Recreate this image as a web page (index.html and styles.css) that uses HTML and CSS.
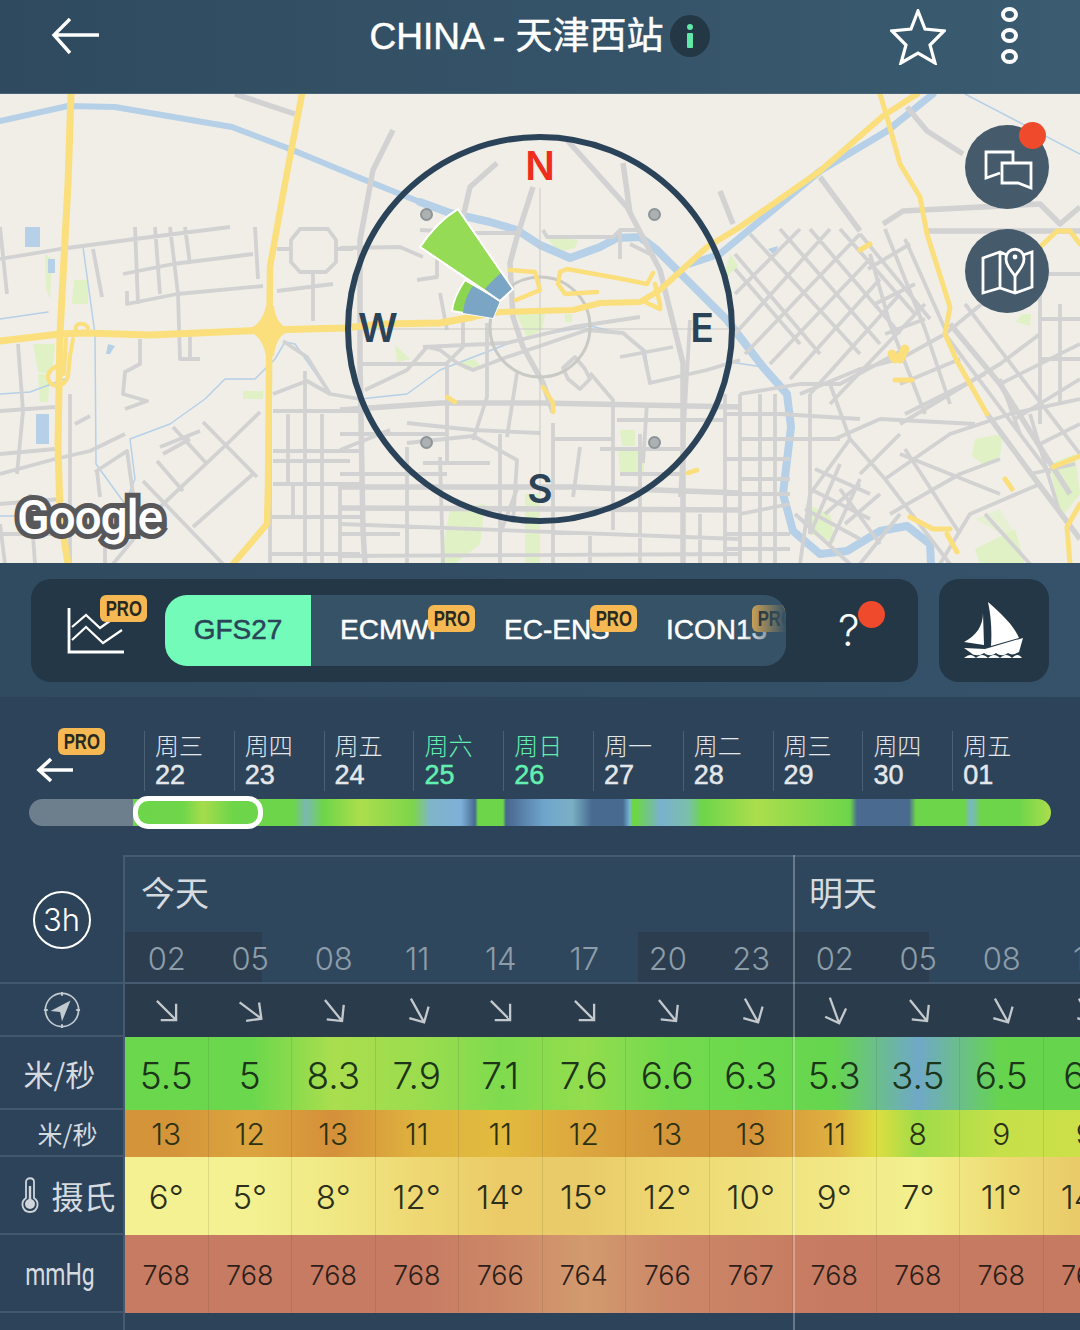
FILE: index.html
```html
<!DOCTYPE html>
<html lang="en">
<head>
    <meta charset="UTF-8">
    <meta name="viewport" content="width=device-width, initial-scale=1.0">
    <title>CHINA - 天津西站</title>
    <link rel="stylesheet" href="styles.css">
</head>
<body>
    <svg class="defs" width="0" height="0">
        <symbol id="arrow" viewBox="0 0 26 26">
            <path d="M3 3L23 23M7 23H23V6" fill="none" stroke="currentColor" stroke-width="2.4"/>
        </symbol>
    </svg>

    <header class="topbar">
        <div class="topbar-left">
            <svg class="back-icon" viewBox="0 0 50 38"><path d="M48 18H3M19 2L3 18L19 36" fill="none" stroke="#fff" stroke-width="3.4"/></svg>
        </div>
        <div class="title-group">
            <span class="title">CHINA - 天津西站</span>
            <span class="info-pill"><i class="info-dot"></i><i class="info-stem"></i></span>
        </div>
        <div class="topbar-right">
            <svg class="star-icon" viewBox="0 0 56 56"><path d="M28 2L35 20L54 22L40 36L45 54L28 44L11 54L16 36L2 22L21 20Z" fill="none" stroke="#fff" stroke-width="3.2"/></svg>
            <div class="kebab"><i></i><i></i><i></i></div>
        </div>
    </header>

    <section class="map">
        <svg class="map-art" viewBox="0 0 1080 470" width="1080" height="470">
            <rect width="1080" height="470" fill="#f0eee7"/>
            <!-- parks -->
            <g fill="#dff1c5">
                <path d="M547 143L578 146L575 154L558 158Z"/>
                <path d="M515 218L545 220L542 236L527 243Z"/>
                <path d="M565 220H572V228H565Z"/>
                <path d="M395 251L410 265L397 268Z"/>
                <path d="M460 268L475 265L480 272L465 276Z"/>
                <path d="M620 336H635V352H622Z"/>
                <path d="M618 355H644V378H620Z"/>
                <path d="M450 415L485 410L480 450L455 470H440Z"/>
                <path d="M525 400H540V470H525Z"/>
                <path d="M45 160L52 165L50 205L46 195Z"/>
                <path d="M74 186H88V210H72Z"/>
                <path d="M33 250H55L52 280L38 278Z"/>
                <path d="M38 280H50L48 308H40Z"/>
                <path d="M243 297H263V305H243Z"/>
                <path d="M730 160L738 172L722 188Z"/>
                <path d="M1022 220H1031L1030 232L1016 228Z"/>
                <path d="M975 345L1003 340L1000 362L985 372L972 362Z"/>
                <path d="M1050 370L1075 360L1080 400L1060 425Z"/>
                <path d="M975 455L1015 435L1025 470H980Z"/>
                <path d="M975 425L1000 415L1020 450Z" opacity=".6"/>
                <path d="M805 410L830 420L835 448L810 440Z"/>
            </g>
            <!-- water -->
            <g fill="none" stroke="#b6d0e8" stroke-linejoin="round" stroke-linecap="round">
                <path stroke-width="6" d="M0 27L68 12L115 13L232 33L290 55L360 84L420 108"/>
                <path stroke-width="8" d="M420 108L450 119L490 128L517 136L540 151L570 164L600 153L617 144L640 143L657 156L687 186L727 226L763 273L787 300L791 333L783 400L793 437L820 460L847 457L880 437L907 432L930 450L931 470"/>
                <path stroke-width="7" d="M690 170L720 160L820 77L887 37L933 0"/>
                <path stroke-width="1.5" d="M83 153L95 240L96 370L125 410M0 225L48 218M0 422L45 422M125 410L135 385L130 345L170 330L205 305L225 285L255 285L275 265L285 248L295 250L330 300L360 305L407 300L440 276L520 245L590 232L625 240L645 256L650 288L700 278L730 268L763 273M965 0L1080 60"/>
                <path stroke-width="1.5" d="M0 300L30 298L65 285"/>
            </g>
            <g fill="#b6d0e8">
                <rect x="25" y="133" width="15" height="20"/>
                <rect x="36" y="320" width="13" height="30"/>
                <rect x="48" y="165" width="7" height="14"/>
                <path d="M108 250L115 252L110 260H106Z"/>
                <path d="M768 155L778 152L775 162Z"/>
            </g>
            <!-- streets, wide -->
            <g fill="none" stroke="#d2d2d2" stroke-width="5.5" stroke-linejoin="round">
                <path d="M235 0L295 20M907 13L927 37L963 60M927 137H1080M883 130L903 117L1040 110L1060 130L1080 113M820 83L860 137M720 97L733 130"/>
                <path d="M533 93L517 143L510 169L513 223L523 253L543 289L553 318M393 36L373 76L360 146L360 269L363 436L365 470"/>
                <path d="M497 69L470 93L463 123M567 46L627 113L660 176L683 269L683 470M623 69L630 119"/>
                <path d="M987 320L1035 385L1080 445M950 230L1000 290L1070 400"/>
                <path d="M340 316L440 309L540 309L740 313M340 414L740 416M340 393L573 393L740 399"/>
            </g>
            <!-- streets -->
            <g fill="none" stroke="#d2d2d2" stroke-width="3.8" stroke-linejoin="round">
                <path d="M0 165L60 155L135 145L230 133M135 133L138 210M123 180L173 170L253 160M127 197V210L177 200L263 192M155 133L160 200M170 133L178 200L180 265H200M185 133L190 170M255 133L258 185M93 155L102 203M0 133L7 200"/>
                <path d="M190 240V265M140 245V270L125 278L123 300L147 307L125 315M18 250L23 317L17 380M0 317L55 313M0 360L55 355M0 380L55 365L90 357L125 340M70 300V470M75 330L90 322M95 378L127 357L133 400"/>
                <path d="M143 387L223 470M203 328L257 383M173 333L207 370M160 353L200 337M163 360L190 345M260 318L227 350L160 413L113 470M253 380L193 433M157 367L183 397M97 377L100 403M60 405L0 410M60 440L0 440M5 470L0 430M30 400L35 470M105 470L105 440"/>
                <path d="M273 317H360M273 357H360M273 367H350M273 390H360M270 423H360M270 460H360M305 277V470M322 320V470M288 320V390M340 390V470M293 390V423M270 300V470"/>
                <path d="M273 300L307 287L330 300M283 247L307 263L330 300L360 305"/>
                <path d="M300 135L328 135L336 146L336 168L326 178L300 178L291 168L291 146ZM313 180V227M277 197L333 190M277 155H291M337 155H353"/>
                <path d="M420 136L473 139L517 139M340 154L400 153L423 163M437 163V183L417 186M440 199L447 236M463 226V253L447 269L447 369M543 136L547 143H613L620 136H640M620 136V165M630 150L650 160"/>
                <path d="M365 296L407 276L427 253L440 256L457 269L473 276L507 263L587 236L623 239L643 256L650 289L707 276L740 266M423 253L507 249L573 233L640 223M487 229V303L473 346M517 279L507 343"/>
                <path d="M590 279L613 306V436M647 309L643 369M690 226L680 403M620 263L673 253M407 329L473 336L540 339M340 356L390 336M407 349L473 342L517 366L513 429M407 353V470M423 369H490M553 329V470M617 326H727M580 353L573 403M440 363L443 470M340 430L740 445M340 462L740 460M500 440V470M590 440V470M640 420V470M700 420V470M340 440H400"/>
                <path d="M360 270H447M340 340H447M500 340V470M340 380H447M600 355H680M620 380H680M640 340V420M553 345H613M517 395L500 440"/>
                <path d="M563 274L575 263L585 275L590 285L580 295L568 285Z"/>
                <path d="M750 140L860 260M780 135L880 250M810 135L900 240M840 135L915 220M735 160L820 260M735 175L800 250M860 140L930 225M735 200L800 135M735 240L830 135M745 260L860 140M770 270L870 165M790 285L880 185M810 300L900 200M830 310L925 210"/>
                <path d="M870 160L890 230L925 320M885 135L925 235L950 310M905 145L945 235M868 175L910 150M875 210L915 190M885 240L925 225"/>
                <path d="M800 300L860 275L900 265L945 240L1000 195M740 300L800 290L840 290L905 255M830 290L850 345L885 385L950 470M780 320L860 325M740 345L840 345M740 385L790 385M740 420L790 410M760 300V470M725 300V470M810 300V440"/>
                <path d="M725 320H790M725 365H790M725 400H790M725 440H790M725 455H790M740 300V470M775 300V470"/>
                <path d="M850 345L810 400L800 470M815 375L870 400M810 395L870 425M805 415L860 445M840 370L810 440M860 385L830 450"/>
                <path d="M900 330L950 300L1000 270L1040 240M885 385L950 340L1010 320L1080 305M945 240L1050 380M965 210L1080 360M1040 180V330M1060 210V310M1040 180H1080M1040 225H1080M1040 265H1080M990 210L1030 165M1030 320L1060 420M1000 285L1020 340"/>
                <path d="M1000 290L1080 250M1015 325L1080 285M1040 350L1080 330M900 290L960 265M905 320L985 280"/>
                <path d="M860 380L900 340M900 360L1000 400M835 345L880 325L975 330M890 420L960 380L1000 365M940 470L970 420L1040 390M860 470L900 420M825 420L860 390M845 430L880 400M985 420L1030 470M1030 380L1075 370M905 355L960 440M840 395L880 450M795 420L850 470"/>
            </g>
            <!-- faint ring and cross hair -->
            <g fill="none" stroke="#c9c9c5">
                <circle cx="540" cy="233" r="50" stroke-width="3"/>
                <path d="M540 94V400M340 235H740" stroke-width="1"/>
            </g>
            <!-- highways -->
            <g fill="none" stroke="#fadf7c" stroke-linejoin="round" stroke-linecap="round">
                <path stroke-width="7" d="M71 0L68 90L60 240L58 350L60 420L68 470"/>
                <path stroke-width="7" d="M0 247L60 240L85 239L150 241L270 236L345 234L380 230L440 229L473 223"/>
                <path stroke-width="6" d="M473 223L500 218L573 216L600 209L640 208L660 196L707 153L740 133L820 77L883 22L917 0"/>
                <path stroke-width="6.5" d="M302 0L283 100L270 173L268 393L267 430L233 470"/>
                <path stroke-width="5" d="M880 0L887 23L900 70L920 103L927 140L950 213L945 240L957 267L987 320"/>
                <path stroke-width="4" d="M78 240C70 230 84 226 88 234M73 245L70 262L68 283C62 297 48 292 48 283C48 276 56 272 62 270M66 245L64 280"/>
                <path stroke-width="4.5" d="M510 176L535 178L540 196L516 206M597 198L565 200L558 190L560 178L567 175L617 184L647 190L653 179M543 293L553 309V318M447 303L455 308M688 379L697 376M645 208L660 215V210L655 190"/>
                <path stroke-width="5" d="M1040 153L1057 137H1070L1080 150M1053 373L1080 362M1080 410L1067 433L1070 470M910 423L933 435H950M947 440L957 458M860 156L870 150M1005 385L1012 395M895 286H912"/>
                <path stroke-width="9" d="M900 265L905 255M895 265L892 260"/>
            </g>
            <path fill="#fadf7c" d="M245 236Q262 232 266 212H274Q276 232 292 236Q276 240 274 262H266Q262 240 245 236Z"/>
        </svg>

        <div class="compass">
            <i class="compass-dot dot-nw"></i><i class="compass-dot dot-ne"></i><i class="compass-dot dot-sw"></i><i class="compass-dot dot-se"></i>
            <svg class="sectors" viewBox="0 0 378 378" width="378" height="378">
                <g transform="translate(-351 -46)" stroke="#fff" stroke-width="1.8">
                    <path d="M465 186C457 198 453 207 452 217L493 224L500 207Z" fill="#8cd64f"/>
                    <path d="M473 192C467 200 464 209 463 219L493 224L500 207Z" fill="#7aa5c4" stroke="none"/>
                    <path d="M458 115L513 195L500 207L420 153C430 138 443 124 458 115Z" fill="#96db56"/>
                    <path d="M501 179L513 195L500 207L485 195C490 189 495 184 501 179Z" fill="#7aa5c4" stroke="none"/>
                    <path d="M458 115L513 195L500 207L420 153C430 138 443 124 458 115Z" fill="none"/>
                </g>
            </svg>
            <span class="compass-label north">N</span>
            <span class="compass-label west">W</span>
            <span class="compass-label east">E</span>
            <span class="compass-label south">S</span>
        </div>

        <button class="map-btn chat-btn">
            <svg viewBox="965 125 84 84" width="84" height="84"><path d="M1013 163V152H986V178L1000 173M1002 163H1031V188L1018 183H1002Z" fill="none" stroke="#fff" stroke-width="2.8"/></svg>
            <i class="red-dot"></i>
        </button>
        <button class="map-btn layers-btn">
            <svg viewBox="965 229 84 84" width="84" height="84"><path d="M1007 255L1000 252L983 258V293L1000 288L1015 293L1032 287V252L1023 255M1000 252V288M1015 274V293" fill="none" stroke="#fff" stroke-width="2.8"/><path d="M1015 276C1009 268 1006 264 1006 259C1006 246 1024 246 1024 259C1024 264 1021 268 1015 276Z" fill="none" stroke="#fff" stroke-width="2.8"/><circle cx="1015" cy="257" r="2.4" fill="#fff"/></svg>
        </button>
        <span class="google-mark">Google</span>
    </section>

    <section class="model-bar">
        <div class="model-panel">
            <div class="chart-btn">
                <svg viewBox="0 0 60 50" width="60" height="50"><path d="M2 0V44H57" fill="none" stroke="#fff" stroke-width="2.8"/><path d="M5 19L19 7L33 20L47 10M5 32L19 19L36 35L55 22" fill="none" stroke="#fff" stroke-width="2.2"/></svg>
                <span class="pro pro-chart"><b>PRO</b></span>
            </div>
            <div class="tabs">
                <div class="tab tab-gfs">GFS27</div>
                <div class="tab tab-ecmwf">ECMWF<span class="pro pro-tab"><b>PRO</b></span></div>
                <div class="tab tab-ens">EC-ENS<span class="pro pro-tab"><b>PRO</b></span></div>
                <div class="tab tab-icon">ICON13<span class="pro pro-tab"><b>PRO</b></span></div>
            </div>
            <div class="help-btn">?<i class="red-dot"></i></div>
        </div>
        <div class="boat-btn">
            <svg viewBox="0 0 60 60" width="60" height="60">
                <path d="M24 2C38 14 50 26 55 38L27 46C28 30 27 16 24 2Z" fill="#fff"/>
                <path d="M19 13C19 26 12 36 0 42L20 45Z" fill="#fff"/>
                <path d="M0 48L21 49L48 41L59 38L55 52C50 55 47 55 44 53C40 56 36 56 32 53C28 56 24 56 20 53C16 56 10 56 7 53Z" fill="#fff"/>
                <path d="M0 58C5 54 8 54 12 58C16 54 20 54 24 58C28 54 32 54 36 58C40 54 44 54 48 58C52 54 55 54 58 58" fill="#fff"/>
            </svg>
        </div>
    </section>

    <section class="days">
        <div class="days-row">
            <div class="days-back">
                <span class="pro pro-days"><b>PRO</b></span>
                <svg class="days-arrow" viewBox="0 0 38 26" width="38" height="26"><path d="M37 13H3M15 2L3 13L15 24" fill="none" stroke="#fff" stroke-width="3.6"/></svg>
            </div>
            <div class="day"><span>周三</span><b>22</b></div>
            <div class="day"><span>周四</span><b>23</b></div>
            <div class="day"><span>周五</span><b>24</b></div>
            <div class="day weekend"><span>周六</span><b>25</b></div>
            <div class="day weekend"><span>周日</span><b>26</b></div>
            <div class="day"><span>周一</span><b>27</b></div>
            <div class="day"><span>周二</span><b>28</b></div>
            <div class="day"><span>周三</span><b>29</b></div>
            <div class="day"><span>周四</span><b>30</b></div>
            <div class="day"><span>周五</span><b>01</b></div>
        </div>
        <div class="timeline">
            <div class="timeline-past"></div>
            <div class="timeline-wind"></div>
            <div class="timeline-pick"></div>
        </div>
    </section>

    <section class="table">
        <div class="table-head">
            <div class="row-label head-label"><span class="step">3h</span></div>
            <div class="head-main">
                <div class="day-titles">
                    <div class="day-title day-today">今天</div>
                    <div class="day-title">明天</div>
                </div>
                <div class="hours">
                    <span>02</span><span>05</span><span>08</span><span>11</span><span>14</span><span>17</span><span>20</span><span>23</span><span>02</span><span>05</span><span>08</span><span>11</span>
                </div>
            </div>
        </div>

        <div class="row row-dir">
            <div class="row-label">
                <svg viewBox="0 0 40 40" width="38" height="38"><circle cx="20" cy="20" r="17.5" fill="none" stroke="#c3cad0" stroke-width="1.8"/><path d="M20 1V5M20 35V39M1 20H5M35 20H39" stroke="#c3cad0" stroke-width="2"/><path d="M29 10L8 21L18 22L20 32Z" fill="#c3cad0"/></svg>
            </div>
            <div class="cells dir-cells">
                <div class="cell"><svg class="arrow"><use href="#arrow"/></svg></div>
                <div class="cell"><svg class="arrow rot-n8"><use href="#arrow"/></svg></div>
                <div class="cell"><svg class="arrow rot-6"><use href="#arrow"/></svg></div>
                <div class="cell"><svg class="arrow rot-16"><use href="#arrow"/></svg></div>
                <div class="cell"><svg class="arrow"><use href="#arrow"/></svg></div>
                <div class="cell"><svg class="arrow"><use href="#arrow"/></svg></div>
                <div class="cell"><svg class="arrow rot-6"><use href="#arrow"/></svg></div>
                <div class="cell"><svg class="arrow rot-16"><use href="#arrow"/></svg></div>
                <div class="cell"><svg class="arrow rot-25"><use href="#arrow"/></svg></div>
                <div class="cell"><svg class="arrow rot-6"><use href="#arrow"/></svg></div>
                <div class="cell"><svg class="arrow rot-16"><use href="#arrow"/></svg></div>
                <div class="cell"><svg class="arrow rot-16"><use href="#arrow"/></svg></div>
            </div>
        </div>

        <div class="row row-wind">
            <div class="row-label">米/秒</div>
            <div class="cells">
                <div class="cell">5.5</div><div class="cell">5</div><div class="cell">8.3</div><div class="cell">7.9</div><div class="cell">7.1</div><div class="cell">7.6</div><div class="cell">6.6</div><div class="cell">6.3</div><div class="cell">5.3</div><div class="cell">3.5</div><div class="cell">6.5</div><div class="cell">6.1</div>
            </div>
        </div>

        <div class="row row-gust">
            <div class="row-label">米/秒</div>
            <div class="cells">
                <div class="cell">13</div><div class="cell">12</div><div class="cell">13</div><div class="cell">11</div><div class="cell">11</div><div class="cell">12</div><div class="cell">13</div><div class="cell">13</div><div class="cell">11</div><div class="cell">8</div><div class="cell">9</div><div class="cell">9</div>
            </div>
        </div>

        <div class="row row-temp">
            <div class="row-label">
                <svg viewBox="0 0 18 36" width="18" height="36"><path d="M5 21V5C5 0 13 0 13 5V21C19 25 17 35 9 35C1 35 -1 25 5 21Z" fill="none" stroke="#cfd5da" stroke-width="1.8"/><circle cx="9" cy="27" r="5" fill="#cfd5da"/><path d="M9 9V27" stroke="#cfd5da" stroke-width="2.4"/></svg>
                <span>摄氏</span>
            </div>
            <div class="cells">
                <div class="cell">6°</div><div class="cell">5°</div><div class="cell">8°</div><div class="cell">12°</div><div class="cell">14°</div><div class="cell">15°</div><div class="cell">12°</div><div class="cell">10°</div><div class="cell">9°</div><div class="cell">7°</div><div class="cell">11°</div><div class="cell">14°</div>
            </div>
        </div>

        <div class="row row-press">
            <div class="row-label"><span class="narrow">mmHg</span></div>
            <div class="cells">
                <div class="cell">768</div><div class="cell">768</div><div class="cell">768</div><div class="cell">768</div><div class="cell">766</div><div class="cell">764</div><div class="cell">766</div><div class="cell">767</div><div class="cell">768</div><div class="cell">768</div><div class="cell">768</div><div class="cell">768</div>
            </div>
        </div>

        <div class="row row-foot">
            <div class="row-label"></div>
        </div>

        <div class="day-line"></div>
    </section>
</body>
</html>
```

FILE: styles.css
```css
* {
    box-sizing: border-box;
}

html, body {
    height: 100%;
}

body {
    margin: 0;
    width: 1080px;
    height: 1330px;
    overflow: hidden;
    background: #2d4359;
    color: #fff;
    font-family: "Inter", "Noto Sans CJK SC", sans-serif;
    display: flex;
    flex-direction: column;
}

i {
    display: block;
}

.defs {
    position: absolute;
}

/* top bar */
.topbar {
    height: 94px;
    flex: none;
    padding-bottom: 22px;
    display: grid;
    grid-template-columns: 1fr auto 1fr;
    align-items: center;
    background: linear-gradient(90deg, #2f4a5f, #3a5b70);
    border-bottom: 1px solid #496577;
}

.topbar-left {
    padding-left: 51px;
}

.back-icon {
    display: block;
    width: 50px;
    height: 38px;
}

.title-group {
    display: flex;
    align-items: center;
    gap: 7px;
}

.title {
    font-family: "Liberation Sans", "Noto Sans CJK SC", sans-serif;
    font-size: 37px;
    line-height: 42px;
    margin-top: 2px;
    color: #fff;
    white-space: nowrap;
    -webkit-text-stroke: .5px #fff;
}

.info-pill {
    width: 40px;
    height: 42px;
    border-radius: 50%;
    background: #243744;
    display: flex;
    flex-direction: column;
    align-items: center;
    justify-content: center;
    gap: 3px;
}

.info-dot {
    width: 6px;
    height: 6px;
    border-radius: 50%;
    background: #5fe8a8;
}

.info-stem {
    width: 6px;
    height: 15px;
    background: #5fe8a8;
    border-radius: 1px;
}

.topbar-right {
    display: flex;
    align-items: center;
    justify-content: flex-end;
    gap: 55px;
    padding-right: 62px;
}

.star-icon {
    width: 56px;
    height: 56px;
    margin-top: 3px;
}

.kebab {
    display: flex;
    flex-direction: column;
    gap: 6px;
}

.kebab i {
    width: 17px;
    height: 15px;
    border: 4px solid #fff;
    border-radius: 50%;
}

/* map */
.map {
    position: relative;
    height: 469px;
    flex: none;
    overflow: hidden;
}

.map-art {
    display: block;
}

.compass {
    position: absolute;
    left: 345px;
    top: 40px;
    width: 390px;
    height: 390px;
    border: 6px solid #2b4358;
    border-radius: 50%;
}

.sectors {
    position: absolute;
    left: 0;
    top: 0;
}

.compass-dot {
    position: absolute;
    width: 13px;
    height: 13px;
    border-radius: 50%;
    background: #aeb1b2;
    border: 2px solid #8c9498;
}

.dot-nw { left: 69px; top: 68px; }
.dot-ne { left: 297px; top: 68px; }
.dot-sw { left: 69px; top: 296px; }
.dot-se { left: 297px; top: 296px; }

.compass-label {
    position: absolute;
    font-family: "Inter", sans-serif;
    font-size: 39px;
    font-weight: 600;
    line-height: 40px;
    color: #2b4358;
    transform: translate(-50%, -50%);
}

.north { left: 189px; top: 26px; color: #ee2d1d; }
.west { left: 27px; top: 188px; }
.east { left: 351px; top: 188px; }
.south { left: 189px; top: 349px; }

.map-btn {
    position: absolute;
    left: 965px;
    width: 84px;
    height: 84px;
    padding: 0;
    border: 0;
    border-radius: 50%;
    background: #455a6b;
}

.map-btn svg {
    display: block;
}

.chat-btn { top: 31px; }
.layers-btn { top: 135px; }

.red-dot {
    position: absolute;
    width: 27px;
    height: 27px;
    border-radius: 50%;
    background: #ee4a2b;
}

.chat-btn .red-dot {
    left: 54px;
    top: -3px;
}

.google-mark {
    position: absolute;
    left: 17px;
    top: 394px;
    font-family: "Roboto", sans-serif;
    font-size: 48px;
    font-weight: 500;
    line-height: 60px;
    letter-spacing: -1.2px;
    color: #fff;
    -webkit-text-stroke: 10px #58585a;
    paint-order: stroke fill;
}

/* model selector */
.model-bar {
    height: 134px;
    flex: none;
    padding: 16px 31px 15px;
    display: flex;
    gap: 21px;
    background: linear-gradient(90deg, #304a5f, #35526a);
}

.model-panel {
    width: 887px;
    display: flex;
    align-items: center;
    background: #233746;
    border-radius: 20px;
}

.chart-btn {
    position: relative;
    width: 134px;
    height: 100%;
    flex: none;
    padding: 29px 0 0 36px;
}

.chart-btn svg {
    display: block;
}

.pro {
    position: absolute;
    width: 47px;
    height: 27px;
    background: #f6b853;
    border-radius: 6px;
    color: #262a20;
    font-family: "Liberation Sans", sans-serif;
    font-size: 22px;
    line-height: 27px;
    text-align: center;
}

.pro b {
    display: inline-block;
    transform: scaleX(.76);
}

.pro-chart {
    left: 69px;
    top: 16px;
}

.pro-tab {
    right: 3px;
    top: 10px;
}

.pro-days {
    left: 58px;
    top: -3px;
}

.tabs {
    position: relative;
    width: 621px;
    height: 71px;
    flex: none;
    display: flex;
    overflow: hidden;
    background: #355266;
    border-radius: 22px;
}

.tabs::after {
    content: "";
    position: absolute;
    z-index: 1;
    right: 0;
    top: 0;
    bottom: 0;
    width: 45px;
    background: linear-gradient(90deg, rgba(53, 82, 102, 0), #355266);
}

.tab {
    position: relative;
    flex: none;
    font-family: "Liberation Sans", sans-serif;
    font-size: 28px;
    line-height: 69px;
    color: #fff;
    white-space: nowrap;
    -webkit-text-stroke: .5px currentColor;
}

.pro {
    -webkit-text-stroke: 0;
}

.tab-gfs {
    width: 146px;
    background: #73fbb9;
    color: #2a4558;
    text-align: center;
}

.tab-ecmwf {
    width: 167px;
    padding-left: 29px;
}

.tab-ens {
    width: 162px;
    padding-left: 26px;
}

.tab-icon {
    width: 160px;
    padding-left: 26px;
}

.tab-icon .pro {
    left: 112px;
    right: auto;
}

.help-btn {
    position: relative;
    flex: 1;
    height: 100%;
    font-family: "Inter", sans-serif;
    font-size: 43px;
    font-weight: 300;
    line-height: 103px;
    padding-left: 52px;
    color: #fff;
}

.help-btn .red-dot {
    left: 72px;
    top: 22px;
}

.boat-btn {
    width: 110px;
    padding: 21px 0 0 25px;
    background: #233746;
    border-radius: 20px;
}

/* day strip */
.days {
    height: 158px;
    flex: none;
    padding-top: 34px;
    background: #2d4359;
}

.days-row {
    display: flex;
    height: 60px;
}

.days-back {
    position: relative;
    width: 144px;
    flex: none;
}

.days-arrow {
    position: absolute;
    left: 36px;
    top: 26px;
}

.day {
    width: 89.8px;
    flex: none;
    padding-left: 10px;
    border-left: 1px solid #4b6073;
    display: flex;
    flex-direction: column;
    color: #e4e7ea;
}

.day span {
    font-family: "Noto Sans CJK SC", sans-serif;
    font-size: 24px;
    line-height: 28px;
    font-weight: 300;
}

.day b {
    font-family: "Liberation Sans", sans-serif;
    font-size: 27px;
    line-height: 32px;
    font-weight: 400;
    -webkit-text-stroke: .5px currentColor;
}

.weekend {
    color: #62efb0;
}

.timeline {
    position: relative;
    display: flex;
    height: 27px;
    margin: 8px 29px 0;
    border-radius: 14px;
    overflow: visible;
}

.timeline-past {
    width: 104px;
    background: #6d7f8c;
    border-radius: 14px 0 0 14px;
}

.timeline-wind {
    flex: 1;
    border-radius: 0 14px 14px 0;
    background: linear-gradient(90deg,
        #6dd54a 0, #6fd64a 50px, #a6dc4c 70px, #6dd54a 100px, #6dd54a 160px,
        #7ab8b0 173px, #6dd54a 190px, #acde4c 228px, #7cd54a 280px,
        #7fb5c8 297px, #7db0d8 328px, #486a90 342px, #6dd54a 345px, #6dd54a 370px,
        #48668e 373px, #6fa5cc 411px, #7ab0c4 439px, #486a90 459px, #486a90 490px,
        #7ab8d8 497px, #6dd54a 499px, #6dd54a 504px, #79b0d0 528px, #7ac0a8 556px,
        #6dd54a 569px, #acde4c 624px, #6dd54a 717px, #4a6a90 724px, #4a6a90 776px,
        #6dd54a 783px, #6dd54a 831px, #7ab5c8 838px, #6dd54a 848px, #6dd54a 886px, #acde4c 918px);
}

.timeline-pick {
    position: absolute;
    left: 104px;
    top: -3px;
    width: 130px;
    height: 33px;
    border: 5px solid #fff;
    border-radius: 15px;
}

/* forecast table */
.table {
    position: relative;
    flex: 1;
    display: flex;
    flex-direction: column;
    overflow: hidden;
    background: #2d4359;
}

.row-label {
    width: 125px;
    flex: none;
    display: flex;
    align-items: center;
    justify-content: center;
    border-right: 2px solid #465b6f;
    border-bottom: 2px solid #43586c;
    color: #d6dbe0;
    font-family: "Noto Sans CJK SC", sans-serif;
}

.table-head {
    height: 129px;
    flex: none;
    display: flex;
}

.step {
    width: 58px;
    height: 58px;
    border: 2px solid #fff;
    border-radius: 50%;
    color: #fff;
    font-family: "Inter", sans-serif;
    font-size: 31px;
    font-weight: 300;
    line-height: 54px;
    text-align: center;
}

.head-label {
    padding-top: 2px;
}

.head-main {
    flex: 1;
    min-width: 0;
    display: flex;
    flex-direction: column;
    background: #2f475c;
    border-top: 2px solid #465b6f;
    border-bottom: 2px solid #465b6f;
}

.day-titles {
    flex: 1;
    display: flex;
}

.day-title {
    flex: none;
    padding-left: 16px;
    font-family: "Noto Sans CJK SC", sans-serif;
    font-size: 34px;
    line-height: 70px;
    color: #d6dbe0;
}

.day-today {
    width: 668px;
}

.hours {
    height: 50px;
    display: flex;
    background: linear-gradient(90deg,
        #2b3d4e 137px, transparent 137px, transparent 513px,
        #2b3d4e 513px, #2b3d4e 804px, transparent 804px);
}

.hours span {
    width: 83.5px;
    flex: none;
    text-align: center;
    font-size: 31px;
    font-weight: 300;
    line-height: 54px;
    color: #8d9daa;
}

.row {
    display: flex;
    flex: none;
}

.cells {
    flex: 1;
    min-width: 0;
    display: flex;
    overflow: hidden;
}

.cell {
    width: 83.5px;
    flex: none;
    display: flex;
    align-items: center;
    justify-content: center;
    border-right: 1px solid rgba(70, 60, 40, .13);
}

.row-dir {
    height: 53px;
}

.dir-cells {
    background: #2a3b4b;
}

.dir-cells .cell {
    border-right: 0;
    color: #c3c8cc;
}

.arrow {
    width: 25px;
    height: 25px;
}

.rot-n8 { transform: rotate(-8deg); }
.rot-6 { transform: rotate(6deg); }
.rot-16 { transform: rotate(16deg); }
.rot-25 { transform: rotate(25deg); }

.row-wind {
    height: 73px;
}

.row-wind .row-label {
    font-size: 30px;
    padding-right: 4px;
}

.row-wind .cell {
    padding-top: 3px;
}

.row-wind .cells {
    font-size: 37px;
    font-weight: 300;
    color: #1c3418;
    background: linear-gradient(90deg,
        #6ad74c 41.75px, #6ad74c 125.25px, #aade4e 208.75px, #9cdd4e 292.25px,
        #7fdb4e 375.75px, #93dd4e 459.25px, #74da4d 542.75px, #6bd94d 626.25px,
        #66d54f 709.75px, #6fa8c8 793.25px, #66d54d 876.75px, #66d54d 960.25px);
}

.row-gust {
    height: 47px;
}

.row-gust .row-label {
    font-size: 25px;
    padding-left: 12px;
}

.row-gust .cell {
    padding-top: 1px;
}

.row-gust .cells {
    font-size: 30px;
    font-weight: 300;
    color: #2b3213;
    background: linear-gradient(90deg,
        #d4943a 41.75px, #dca43e 125.25px, #d4903a 208.75px, #dfb23f 292.25px,
        #e2bb3e 375.75px, #dca63e 459.25px, #d4963a 542.75px, #d4933a 626.25px,
        #dfb040 709.75px, #dede40 751px, #a0dc48 793.25px, #c6e04a 876.75px, #cce048 960.25px);
}

.row-temp {
    height: 78px;
}

.row-temp .row-label {
    gap: 12px;
    font-size: 32px;
    padding-left: 14px;
}

.row-temp .cell {
    padding-top: 1px;
}

.row-temp .cells {
    font-size: 33px;
    font-weight: 300;
    color: #2c2f1a;
    background: linear-gradient(90deg,
        #f3f191 41.75px, #f3f191 125.25px, #f0e884 208.75px, #eed873 292.25px,
        #ebcb68 375.75px, #e9cb6a 459.25px, #eed872 542.75px, #efe07c 626.25px,
        #f1e885 709.75px, #f3f08f 793.25px, #eedb74 876.75px, #e8c968 960.25px);
}

.row-press {
    height: 78px;
}

.row-press .row-label {
    font-family: "Roboto", sans-serif;
    font-size: 31px;
    font-weight: 400;
    padding-right: 4px;
    padding-top: 2px;
}

.narrow {
    display: inline-block;
    transform: scaleX(.74);
}

.row-press .cell {
    padding-top: 3px;
}

.row-press .cells {
    font-size: 27px;
    font-weight: 300;
    color: #2b2019;
    background: linear-gradient(90deg,
        #c77b63 41.75px, #c77b63 292.25px, #cc8767 375.75px, #d29a6e 459.25px,
        #cc8868 542.75px, #c98064 626.25px, #c77a62 709.75px, #c77a62 960.25px);
}

.row-foot {
    flex: 1;
}

.row-foot .row-label {
    border-bottom: 0;
}

.day-line {
    position: absolute;
    left: 793px;
    top: 0;
    bottom: 0;
    width: 2px;
    background: rgba(255, 255, 255, .28);
}
```
